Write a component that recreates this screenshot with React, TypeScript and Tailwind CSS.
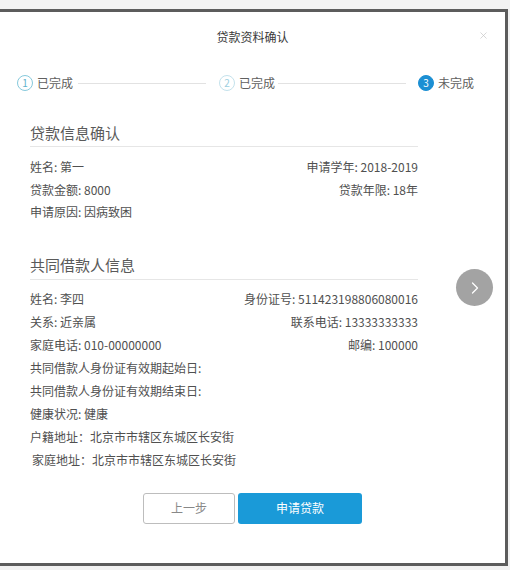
import { ChevronRight, X } from "lucide-react";

const font = { fontFamily: '"Noto Sans CJK SC", "Noto Sans", sans-serif' };

type Row = { left: string; right?: string };

const loanRows: Row[] = [
  { left: "姓名: 第一", right: "申请学年: 2018-2019" },
  { left: "贷款金额: 8000", right: "贷款年限: 18年" },
  { left: "申请原因: 因病致困" },
];

const coRows: Row[] = [
  { left: "姓名: 李四", right: "身份证号: 511423198806080016" },
  { left: "关系: 近亲属", right: "联系电话: 13333333333" },
  { left: "家庭电话: 010-00000000", right: "邮编: 100000" },
  { left: "共同借款人身份证有效期起始日:" },
  { left: "共同借款人身份证有效期结束日:" },
  { left: "健康状况: 健康" },
  { left: "户籍地址：北京市市辖区东城区长安街" },
  { left: "家庭地址：北京市市辖区东城区长安街" },
];

const Step = ({ n, label, state }: { n: number; label: string; state: "done" | "faint" | "active" }) => {
  const circle =
    state === "active"
      ? "bg-[#1c8fd3] border-[#1c8fd3] text-white"
      : state === "done"
      ? "bg-white border-[#86c9dc] text-[#5fb3cc]"
      : "bg-white border-[#c4e2ec] text-[#9ccfdf]";
  return (
    <div className="flex items-center shrink-0">
      <div className={`w-[16px] h-[16px] rounded-full border flex items-center justify-center text-[10px] leading-none ${circle}`}>
        {n}
      </div>
      <span className="ml-[4px] text-[12px] text-[#606060]">{label}</span>
    </div>
  );
};

const InfoRows = ({ rows, h }: { rows: Row[]; h: string }) => (
  <div className="flex flex-col text-[12px] text-[#505050]">
    {rows.map((r, i) => (
      <div key={i} className={`flex justify-between items-center ${h}`}>
        <span className={i === 7 ? "pl-[2px]" : ""}>{r.left}</span>
        {r.right && <span>{r.right}</span>}
      </div>
    ))}
  </div>
);

export default function App() {
  return (
    <div className="w-[510px] h-[570px] bg-[#f2f2f2] pt-[9px] overflow-hidden" style={font}>
      <div className="relative w-[508px] h-[557px] bg-white border-t-[3px] border-r-[3px] border-b-[3px] border-[#5c5c5c] flex flex-col">
        {/* header */}
        <div className="h-[50px] flex items-center justify-center text-[12px] text-[#3a3a3a]">贷款资料确认</div>
        <X className="absolute right-[16px] top-[18px] w-[11px] h-[11px] text-[#c4c4c4]" strokeWidth={1.5} />

        {/* steps */}
        <div className="h-[42px] flex items-center pl-[17px] pr-[31px]">
          <Step n={1} label="已完成" state="done" />
          <div className="flex-1 h-px bg-[#e2e2e2] ml-[5px] mr-[13px]" />
          <Step n={2} label="已完成" state="faint" />
          <div className="flex-1 h-px bg-[#e2e2e2] ml-[3px] mr-[12px]" />
          <Step n={3} label="未完成" state="active" />
        </div>

        {/* body */}
        <div className="w-[418px] pl-[30px]">
          <div className="mt-[17px] pb-[1px] border-b border-[#e6e6e6] text-[15px] leading-[24px] text-[#5a5a5a]">贷款信息确认</div>
          <div className="mt-[9px]">
            <InfoRows rows={loanRows} h="h-[22.5px]" />
          </div>

          <div className="mt-[29px] pb-[2px] border-b border-[#e6e6e6] text-[15px] leading-[24px] text-[#5a5a5a]">共同借款人信息</div>
          <div className="mt-[8px]">
            <InfoRows rows={coRows} h="h-[23px]" />
          </div>
        </div>

        {/* buttons */}
        <div className="mt-[21px] flex justify-center gap-[3px] text-[12px]">
          <button className="w-[92px] h-[31px] rounded-[3px] border border-[#bdbdbd] bg-white text-[#888]">上一步</button>
          <button className="w-[124px] h-[31px] rounded-[3px] bg-[#1a9ad8] text-white">申请贷款</button>
        </div>

        {/* next arrow */}
        <div className="absolute left-[456px] top-[257px] w-[37px] h-[37px] rounded-full bg-[#a3a3a3] flex items-center justify-center">
          <ChevronRight className="w-[20px] h-[20px] text-white" strokeWidth={1.5} />
        </div>
      </div>
    </div>
  );
}
